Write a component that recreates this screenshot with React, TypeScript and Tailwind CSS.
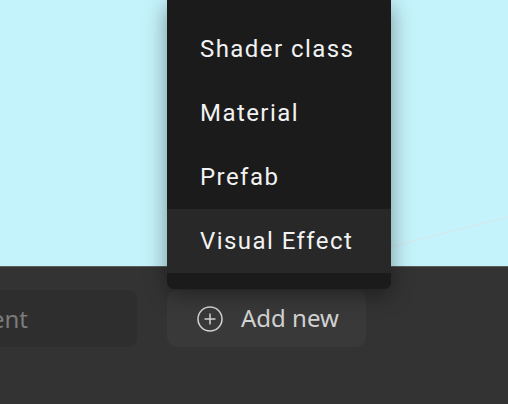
import React from "react";

export default function App() {
  const items = ["Shader class", "Material", "Prefab", "Visual Effect"];
  return (
    <div className="w-[508px] h-[404px] overflow-hidden flex flex-col bg-[#333333]">
      <div className="relative h-[266px] shrink-0 bg-[#c5f3fb]">
        <svg className="absolute left-0 top-0" width="508" height="266">
          <line x1="300" y1="270" x2="508" y2="217" stroke="#d6e6ea" strokeWidth="1.2" />
        </svg>
        <div
          className="absolute left-[167px] top-0 w-[224px] z-10 bg-[#1b1b1b] rounded-b-[7px] pt-[17px] pb-[16px] shadow-[0_6px_22px_rgba(0,0,0,0.4)]"
          style={{ fontFamily: "Roboto, 'Liberation Sans', sans-serif" }}
        >
          {items.map((t, i) => (
            <div
              key={t}
              className={
                "h-[64px] flex items-center pl-[33px] text-[24px] tracking-[0.06em] text-[#f2f2f2] " +
                (i === 3 ? "bg-[#282828]" : "")
              }
            >
              {t}
            </div>
          ))}
        </div>
      </div>
      <div className="h-px bg-[#5c5c5c] shrink-0" />
      <div
        className="flex-1 flex items-start pt-[23px] gap-[30px]"
        style={{ fontFamily: "'Noto Sans', 'Open Sans', sans-serif" }}
      >
        <div className="w-[137px] h-[57px] rounded-r-[9px] bg-[#2e2e2e] flex items-center overflow-hidden">
          <div className="w-[28px] shrink-0 flex justify-end whitespace-nowrap text-[24px] text-[#7b7b7b]">
            Add component
          </div>
        </div>
        <div className="w-[199px] h-[57px] rounded-[10px] bg-[#393939] flex items-center pl-[30px] gap-[18px] text-[24px] text-[#d2d2d2]">
          <svg width="26" height="26" viewBox="0 0 26 26" fill="none" stroke="#d2d2d2" strokeWidth="1.5">
            <circle cx="13" cy="13" r="12" />
            <line x1="13" y1="7.5" x2="13" y2="18.5" />
            <line x1="7.5" y1="13" x2="18.5" y2="13" />
          </svg>
          <span className="leading-none pb-[2px]">Add new</span>
        </div>
      </div>
    </div>
  );
}
